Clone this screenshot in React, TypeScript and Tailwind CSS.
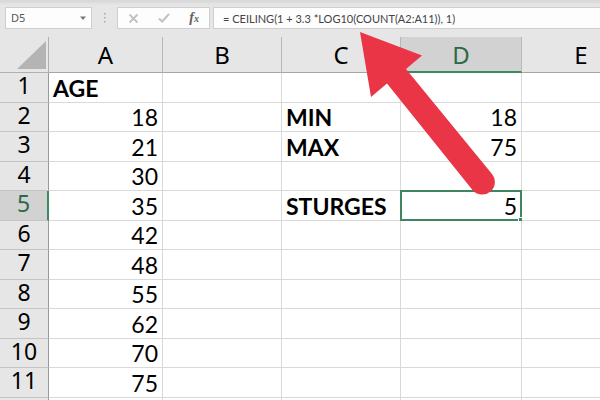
import React, { useState } from 'react'
import clsx from 'clsx'

const columns = ['A', 'B', 'C', 'D', 'E']

const rows = [
  ['AGE', '', '', '', ''],
  ['18', '', 'MIN', '18', ''],
  ['21', '', 'MAX', '75', ''],
  ['30', '', '', '', ''],
  ['35', '', 'STURGES', '5', ''],
  ['42', '', '', '', ''],
  ['48', '', '', '', ''],
  ['55', '', '', '', ''],
  ['62', '', '', '', ''],
  ['70', '', '', '', ''],
  ['75', '', '', '', ''],
]

const selected = { row: 4, col: 3 }

const FormulaBar = () => {
  const [name, setName] = useState('D5')
  const [formula, setFormula] = useState(
    '= CEILING(1 + 3.3 *LOG10(COUNT(A2:A11)), 1)',
  )

  return (
    <div className="flex items-center bg-[#e6e6e6] pt-[7px] pb-2 pl-[5px] shadow-[inset_0_5px_3px_-2px_#d8d8d8]">
      <div className="flex h-[22px] w-[87px] shrink-0 items-center border border-[#cfcfcf] bg-[#fdfdfd] pl-[5px] pr-1">
        <input
          aria-label="Name box"
          className="w-full min-w-0 bg-transparent font-['Noto_Sans',sans-serif] text-[11px] text-[#555] outline-none"
          value={name}
          onChange={(e) => setName(e.target.value)}
        />
        <button aria-label="Show names" className="shrink-0">
          <svg width="8" height="5" viewBox="0 0 8 5">
            <path d="M1 0.5h6L4 4z" fill="#777" />
          </svg>
        </button>
      </div>
      <div className="flex w-[25px] shrink-0 justify-center">
        <svg width="3" height="10" viewBox="0 0 3 10" fill="#a8a8a8">
          <path d="M1 0h1.5v1.5H1zM1 4h1.5v1.5H1zM1 8h1.5v1.5H1z" />
        </svg>
      </div>
      <div className="flex h-[22px] w-[93px] shrink-0 items-center justify-between border border-[#cfcfcf] bg-[#fdfdfd] px-2.5">
        <button aria-label="Cancel">
          <svg width="11" height="11" viewBox="0 0 11 11">
            <path
              d="M1.5 1.5l8 8M9.5 1.5l-8 8"
              stroke="#c2c2c2"
              strokeWidth="1.8"
            />
          </svg>
        </button>
        <button aria-label="Enter">
          <svg width="12" height="10" viewBox="0 0 12 10">
            <path
              d="M1 5.5l3.2 3L11 1"
              fill="none"
              stroke="#c2c2c2"
              strokeWidth="2"
            />
          </svg>
        </button>
        <button
          aria-label="Insert function"
          className="flex items-baseline font-['Liberation_Serif',serif] text-[14px] leading-4 font-bold text-[#606060] italic"
        >
          f<span className="text-[10px]">x</span>
        </button>
      </div>
      <input
        aria-label="Formula"
        className="ml-[3px] h-[22px] min-w-0 flex-1 border border-r-0 border-[#cfcfcf] bg-[#fdfdfd] pl-[9px] font-['Lato',sans-serif] text-[11px] text-[#444] outline-none"
        value={formula}
        onChange={(e) => setFormula(e.target.value)}
      />
    </div>
  )
}

const Sheet = () => {
  return (
    <table className="w-full min-w-[641px] table-fixed border-separate border-spacing-0 text-black">
      <colgroup>
        <col className="w-[49px]" />
        <col className="w-[114px]" />
        <col className="w-[119px]" />
        <col className="w-[119px]" />
        <col className="w-[121px]" />
        <col />
      </colgroup>
      <thead>
        <tr className="h-9 bg-[#e6e6e6] font-['Noto_Sans',sans-serif] text-[24px] leading-[32px]">
          <th className="border-r border-b border-[#b0b0b0] p-0">
            <button aria-label="Select all" className="ml-4 block">
              <svg width="31" height="30" viewBox="0 0 31 30">
                <path d="M30 1v28H1z" fill="#b4b4b4" />
              </svg>
            </button>
          </th>
          {columns.map((column, i) => (
            <th
              key={column}
              className={clsx(
                'border-r pt-px pb-0 font-normal',
                i === selected.col
                  ? 'border-b-2 border-r-[#b8b8b8] border-b-[#3c8a5f] bg-[#d2d2d2] text-[#2b6a49]'
                  : 'border-b border-r-[#b8b8b8] border-b-[#a6a6a6]',
              )}
            >
              {column}
            </th>
          ))}
        </tr>
      </thead>
      <tbody>
        {rows.map((row, r) => (
          <tr key={r} className="h-[30px] even:h-[29px]">
            <th
              className={clsx(
                "border-b p-0 align-top font-['Noto_Sans',sans-serif] text-[23px] leading-[25px] font-normal",
                r === selected.row
                  ? 'border-r-2 border-r-[#3c8a5f] border-b-[#c4c4c4] bg-[#d2d2d2] text-[#2b6a49]'
                  : 'border-r border-r-[#999] border-b-[#c4c4c4] bg-[#e6e6e6]',
              )}
            >
              {r + 1}
            </th>
            {row.map((value, c) => {
              const isSelected = r === selected.row && c === selected.col
              return (
                <td
                  key={c}
                  className={clsx(
                    "relative border-r border-b border-[#d9d9d9] bg-white pt-px pr-1 pb-0 pl-1 font-['Lato',sans-serif] text-[23px] leading-[27px]",
                    /^\d+$/.test(value) ? 'text-right' : 'font-bold',
                  )}
                >
                  {value}
                  {isSelected && (
                    <div className="absolute -inset-px border-2 border-[#3f8560]">
                      <span className="absolute -right-[3px] -bottom-[3px] size-[5px] border-t border-l border-white bg-[#3f8560]" />
                    </div>
                  )}
                </td>
              )
            })}
          </tr>
        ))}
      </tbody>
      {/* empty strip that carries the column lines past the last row */}
      <tfoot>
        <tr className="h-[30px]">
          <td className="border-r border-[#999] bg-[#e6e6e6] p-0" />
          {columns.map((column) => (
            <td key={column} className="border-r border-[#d9d9d9] p-0" />
          ))}
        </tr>
      </tfoot>
    </table>
  )
}

const App = () => {
  return (
    <div className="relative h-screen overflow-hidden bg-white">
      <FormulaBar />
      <Sheet />
      {/* arrow from the result cell up to the formula */}
      <svg
        className="pointer-events-none absolute top-8 left-[360px]"
        width="136"
        height="164"
        viewBox="0 0 136 164"
        fill="#ea3546"
      >
        <path d="M0 0L62 23.5L46 37L132 142A12.6 12.6 0 0 1 112.5 158L27 51.5L11 65Z" />
      </svg>
    </div>
  )
}

export default App
